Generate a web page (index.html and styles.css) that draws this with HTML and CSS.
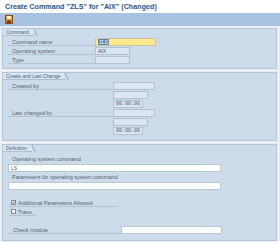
FILE: index.html
```html
<!DOCTYPE html>
<html lang="en">

<head>
    <meta charset="UTF-8">
    <title>Create Command</title>
    <link rel="stylesheet" href="styles.css">
</head>

<body>
    <div class="title">Create Command "ZLS" for "AIX" (Changed)</div>

    <div class="toolbar">
        <svg class="save-icon" width="8" height="9" viewBox="0 0 8 9">
            <rect x="0.5" y="0.5" width="7" height="8" fill="#e0902c" stroke="#8a4a10"/>
            <rect x="2" y="1" width="4" height="3" fill="#fff6e0"/>
            <rect x="2" y="5.5" width="4" height="2.5" fill="#6b3a10"/>
        </svg>
    </div>

    <div class="screen">
        <div class="group group-command">
            <div class="group-tab">Command</div>
            <div class="row">
                <span class="label w-cmd">Command name</span>
                <span class="field field-req f-60"><span class="sel">ZLS</span></span>
            </div>
            <div class="row">
                <span class="label w-cmd">Operating system</span>
                <span class="field field-ro f-35">AIX</span>
            </div>
            <div class="row">
                <span class="label w-cmd">Type</span>
                <span class="field field-ro f-35"></span>
            </div>
        </div>

        <div class="group group-change">
            <div class="group-tab">Create and Last Change</div>
            <div class="row">
                <span class="label w-chg">Created by</span>
                <span class="field field-ro f-42"></span>
            </div>
            <div class="row indent-chg">
                <span class="field field-ro f-35"></span>
            </div>
            <div class="row indent-chg">
                <span class="field field-ro f-30 mono">00:00:00</span>
            </div>
            <div class="row">
                <span class="label w-chg">Last changed by</span>
                <span class="field field-ro f-42"></span>
            </div>
            <div class="row indent-chg">
                <span class="field field-ro f-35"></span>
            </div>
            <div class="row indent-chg">
                <span class="field field-ro f-30 mono">00:00:00</span>
            </div>
        </div>

        <div class="group group-def">
            <div class="group-tab">Definition</div>
            <div class="caption">Operating system command</div>
            <div class="field field-edit f-wide">LS</div>
            <div class="caption">Parameters for operating system command</div>
            <div class="field field-edit f-wide"></div>

            <div class="check-row check-long">
                <svg class="checkbox" width="5" height="5" viewBox="0 0 5 5">
                    <rect x="0.5" y="0.5" width="4" height="4" fill="#fff" stroke="#7f8c99"/>
                    <path d="M1.2 2.6 L2.1 3.6 L3.9 1.2" fill="none" stroke="#2a3440" stroke-width="0.8"/>
                </svg>Additional Parameters Allowed
            </div>
            <div class="check-row check-short">
                <svg class="checkbox" width="5" height="5" viewBox="0 0 5 5">
                    <rect x="0.5" y="0.5" width="4" height="4" fill="#fff" stroke="#7f8c99"/>
                </svg>Trace
            </div>

            <div class="row row-module">
                <span class="label w-mod">Check module</span>
                <span class="field field-edit f-101"></span>
            </div>
        </div>
    </div>
</body>

</html>
```

FILE: styles.css
```css
body {
    margin: 0;
    background: #eceff2;
    font-family: "Liberation Sans", Arial, sans-serif;
    font-size: 5.5px;
    color: #55606c;
}

.title {
    height: 13px;
    line-height: 13px;
    padding-left: 5px;
    background: #fff;
    font-size: 7.2px;
    font-weight: bold;
    color: #2a5593;
}

.toolbar {
    height: 13px;
    background: #a7c2e3;
    display: flex;
    align-items: center;
    padding-left: 5px;
}

.screen {
    padding: 2px 3px 0 2px;
}

.group {
    background: #cddcea;
    border: 1px solid #b3c5d9;
    margin-bottom: 3px;
}

.group-command {
    padding-bottom: 3px;
}

.group-change {
    padding-bottom: 4px;
}

.group-def {
    padding-bottom: 6px;
}

.group-tab {
    position: relative;
    display: inline-block;
    height: 6px;
    line-height: 6px;
    padding: 0 5px 0 3px;
    margin-bottom: 2px;
    background: #d9e5f1;
    border-bottom: 1px solid #aabdd2;
    color: #4a5f7a;
    font-size: 5px;
}

.group-tab::after {
    content: "";
    position: absolute;
    right: -2px;
    top: 0;
    height: 7px;
    width: 3px;
    border-right: 1px solid #8ea6c2;
    transform: skewX(28deg);
}

.row {
    display: flex;
    align-items: center;
    height: 8px;
    margin-bottom: 1px;
    padding-left: 5px;
}

.label {
    height: 7px;
    line-height: 7px;
    padding-left: 4px;
    border-bottom: 1px solid #b6c2cf;
    box-sizing: border-box;
}

.w-cmd {
    width: 87px;
}

.w-chg {
    width: 105px;
}

.w-mod {
    width: 112px;
}

.indent-chg {
    padding-left: 110px;
}

.field {
    display: block;
    height: 8px;
    line-height: 7px;
    padding-left: 2px;
    box-sizing: border-box;
    border: 1px solid #b5c1ce;
    font-size: 5px;
    color: #4a5563;
}

.field-ro {
    background: #dce6f2;
}

.field-req {
    background: #ffe98c;
    border-color: #c9c3a0;
}

.field-edit {
    background: #fff;
    border-color: #bcc6d1;
}

.sel {
    background: #5a84b8;
    color: #fff;
    padding: 0 1px;
}

.mono {
    font-family: "Liberation Mono", "Courier New", monospace;
}

.f-60 { width: 61px; }
.f-42 { width: 42px; }
.f-35 { width: 35px; }
.f-30 { width: 30px; }
.f-101 { width: 101px; }

.f-wide {
    width: 213px;
    margin-left: 5px;
}

.caption {
    height: 8px;
    line-height: 8px;
    padding-left: 9px;
    margin: 1px 0 1px;
}

.check-row {
    display: flex;
    align-items: center;
    height: 8px;
    margin-left: 6px;
    padding-left: 2px;
    border-bottom: 1px solid #b6c2cf;
    box-sizing: border-box;
}

.check-long {
    width: 109px;
    margin-top: 9px;
    margin-bottom: 1px;
}

.check-short {
    width: 27px;
    margin-bottom: 10px;
}

.checkbox {
    margin-right: 2px;
    flex-shrink: 0;
}

.row-module {
    padding-left: 6px;
    margin-bottom: 0;
}
```
